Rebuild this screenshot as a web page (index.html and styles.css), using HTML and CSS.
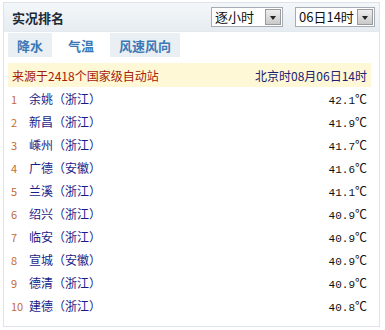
FILE: index.html
```html
<!DOCTYPE html>
<html lang="zh-CN">
<head>
    <meta charset="UTF-8">
    <title>实况排名</title>
    <link rel="stylesheet" href="styles.css">
</head>
<body>
    <div class="box">
        <div class="head">
            <span class="title">实况排名</span>
            <div class="sel sel-type">
                <span class="sel-text">逐小时</span>
                <span class="sel-btn"></span>
            </div>
            <div class="sel sel-time">
                <span class="sel-text">06日14时</span>
                <span class="sel-btn"></span>
            </div>
        </div>

        <div class="tabs">
            <span class="tab">降水</span>
            <span class="tab active">气温</span>
            <span class="tab">风速风向</span>
        </div>

        <div class="info">
            <span class="source">来源于2418个国家级自动站</span>
            <span class="time">北京时08月06日14时</span>
        </div>

        <ul class="rank">
            <li><span class="no">1</span><span class="name">余姚（浙江）</span><span class="val">42.1<i>℃</i></span></li>
            <li><span class="no">2</span><span class="name">新昌（浙江）</span><span class="val">41.9<i>℃</i></span></li>
            <li><span class="no">3</span><span class="name">嵊州（浙江）</span><span class="val">41.7<i>℃</i></span></li>
            <li><span class="no">4</span><span class="name">广德（安徽）</span><span class="val">41.6<i>℃</i></span></li>
            <li><span class="no">5</span><span class="name">兰溪（浙江）</span><span class="val">41.1<i>℃</i></span></li>
            <li><span class="no">6</span><span class="name">绍兴（浙江）</span><span class="val">40.9<i>℃</i></span></li>
            <li><span class="no">7</span><span class="name">临安（浙江）</span><span class="val">40.9<i>℃</i></span></li>
            <li><span class="no">8</span><span class="name">宣城（安徽）</span><span class="val">40.9<i>℃</i></span></li>
            <li><span class="no">9</span><span class="name">德清（浙江）</span><span class="val">40.9<i>℃</i></span></li>
            <li><span class="no">10</span><span class="name">建德（浙江）</span><span class="val">40.8<i>℃</i></span></li>
        </ul>
    </div>
</body>
</html>
```

FILE: styles.css
```css
body {
    margin: 0;
    padding: 2px 3px 0 3px;
    background-color: #ffffff;
    font-family: "Noto Sans CJK SC", "Noto Sans", sans-serif;
    font-size: 12px;
}
.box {
    width: 377px;
    height: 325px;
    border: 1px solid #dde3e8;
    box-sizing: border-box;
}
.head {
    height: 28px;
    display: flex;
    align-items: center;
    background: linear-gradient(#f4f7fa, #e6ecf1);
    border-bottom: 1px solid #e4e9ee;
    padding: 0 4px 0 8px;
}
.title {
    font-size: 13px;
    font-weight: bold;
    color: #1e2a36;
    flex: 1;
}
.sel {
    display: flex;
    align-items: center;
    height: 20px;
    border: 1px solid #a5acb5;
    background-color: #ffffff;
    box-sizing: border-box;
}
.sel-type {
    width: 72px;
    margin-right: 12px;
}
.sel-time {
    width: 80px;
}
.sel-text {
    flex: 1;
    padding-left: 3px;
    font-size: 13px;
    color: #111111;
    line-height: 18px;
}
.sel-btn {
    width: 16px;
    height: 16px;
    margin-right: 1px;
    background: linear-gradient(#eeeeee, #c9c9c9);
    border: 1px solid #9a9a9a;
    box-sizing: border-box;
    display: flex;
    align-items: center;
    justify-content: center;
}
.sel-btn::after {
    content: "";
    border-left: 3px solid transparent;
    border-right: 3px solid transparent;
    border-top: 4px solid #222222;
    margin-top: 2px;
}
.tabs {
    display: flex;
    gap: 5px;
    padding: 1px 0 0 4px;
    height: 24px;
}
.tab {
    display: flex;
    align-items: center;
    padding: 0 9px;
    background-color: #eaeff4;
    color: #3b79b5;
    font-size: 13px;
    font-weight: bold;
}
.tab.active {
    background-color: #ffffff;
    padding: 0 11px;
}
.info {
    display: flex;
    justify-content: space-between;
    align-items: center;
    margin: 6px 8px 0 4px;
    height: 24px;
    padding: 0 4px 0 4px;
    background-color: #fff8d6;
}
.source {
    color: #a32108;
}
.time {
    color: #212173;
}
.rank {
    list-style: none;
    margin: 0;
    padding: 0 12px 0 7px;
}
.rank li {
    display: flex;
    align-items: center;
    height: 23px;
}
.no {
    width: 18px;
    color: #c56a35;
    font-size: 11px;
}
.name {
    flex: 1;
    color: #1b1b86;
}
.val {
    font-family: "Liberation Mono", monospace;
    font-size: 11px;
    color: #111111;
}
.val i {
    font-style: normal;
    font-family: "Noto Sans CJK SC", sans-serif;
    font-size: 12px;
}
```
